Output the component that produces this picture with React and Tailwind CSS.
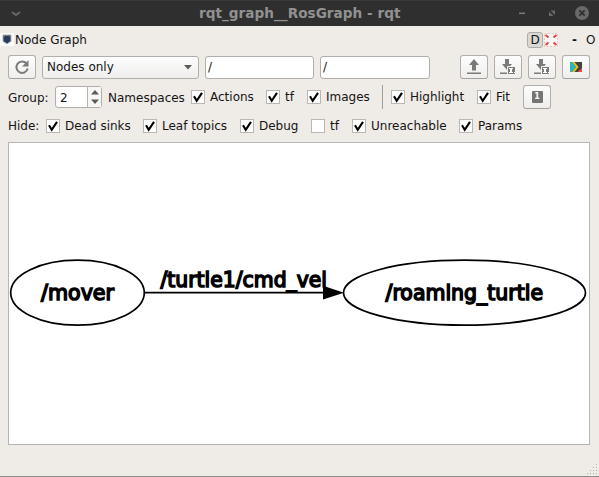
import React from "react";

const button =
  "flex h-6 w-7 shrink-0 items-center justify-center rounded-[3px] border border-[#b1aeab] border-b-[#a3a09d] bg-linear-to-b from-[#fdfdfd] to-[#efeeed]";

function Check({ label, width, checked = true }) {
  return (
    <label className={`flex h-4 shrink-0 items-center gap-[5px] ${width}`}>
      <span className="flex size-[14px] shrink-0 items-center justify-center border border-[#bab7b4] bg-white">
        {checked && (
          <svg className="shrink-0" width="12" height="12" viewBox="0 0 12 12" fill="none" stroke="#000">
            <path d="M2 5.300 L4.700 9.800 L10 1.800" strokeWidth="2.100" />
          </svg>
        )}
      </span>
      <span>{label}</span>
    </label>
  );
}

function ImportIcon() {
  return (
    <svg width="18" height="16" viewBox="0 0 18 16" fill="#7b7b79">
      <path d="M6 0h4v5h3L8 11 3 5h3z" />
      <path d="M1 13.500h7V15H1z" />
      <path d="M8.500 7.500h8v8h-8z" stroke="#f5f4f3" strokeWidth="1" />
      <path d="M10 9h4v1h-1v3h1v1h-4v-1h1v-3h-1zM15 13h1v1h-1z" fill="#fff" />
    </svg>
  );
}

function TitleBar() {
  return (
    <header className="flex h-[26px] items-center border-t border-[#393939] bg-[#2f2f2f] text-[#919191]">
      <svg className="ml-[11px]" width="10" height="8" viewBox="0 0 10 8" fill="none" stroke="#6a6a6a" strokeWidth="1.800">
        <path d="M1 2 L5 5 L9 2" />
      </svg>
      <h1 className="mb-[2px] ml-[178px] w-[319px] whitespace-nowrap text-[13.650px] font-bold leading-[24px]">
        rqt_graph__RosGraph - rqt
      </h1>
      <svg className="mb-px" width="72" height="20" viewBox="0 0 72 20">
        <path d="M1 9.500h6v1.600H1z" fill="#777" />
        <path d="M32.500 7.500h4.500v4.500zM31 8.500l4.500 4.500H31z" fill="#696969" />
        <circle cx="64" cy="10" r="7" fill="#696969" />
        <path d="M61.300 7.300l5.400 5.400m0-5.400l-5.400 5.400" stroke="#2f2f2f" strokeWidth="1.800" />
      </svg>
    </header>
  );
}

function DockTitle() {
  return (
    <div className="flex h-[27px] items-center leading-4">
      <svg width="14" height="13" viewBox="0 0 14 13">
        <path d="M0 0h14v13H0z" fill="#fafafa" />
        <path d="M3 2h8v6.500L9 9.500 7 11 5 9.500 3 8.500z" fill="#293b5a" stroke="#a4b4bd" />
        <path d="M3 2h2v1.500H3zM9 2h2v1.500H9zM6 2h2v1H6z" fill="#87877c" />
      </svg>
      <span className="ml-[1px] w-[512px]">Node Graph</span>
      <span className="flex h-4 w-4 items-center justify-center rounded-[3px] border border-[#adaaa7] bg-[#dad7d5]">D</span>
      <svg className="ml-[1px]" width="14" height="14" viewBox="0 0 14 14" fill="none">
        <path d="M.5.5h13v13H.5z" fill="#faf8f6" stroke="#efc0b3" strokeDasharray="2 1.500" />
        <path d="M1.500 2L4.500 4.500M12.500 2L9.500 4.500M1.500 12l3-2.500M12.500 12l-3-2.500" stroke="#ef3e43" strokeWidth="2" />
      </svg>
      <span className="ml-[14px] w-[14px] font-bold">-</span>
      <span>O</span>
    </div>
  );
}

function Toolbar() {
  return (
    <div className="flex h-6 items-center pl-2">
      <button className={button} aria-label="Refresh">
        <svg width="16" height="16" viewBox="0 0 16 16" fill="none">
          <path d="M12.500 4.500A5.700 5.700 0 1 0 13.700 9.500" stroke="#7b7b79" strokeWidth="2" />
          <path d="M14.500 1v6.500H8z" fill="#7b7b79" />
        </svg>
      </button>
      <div className="ml-[6px] flex h-[23px] w-[157px] shrink-0 items-center justify-between rounded-[3px] border border-[#b1aeab] bg-linear-to-b from-[#fdfdfd] to-[#efeeed] pl-1 pr-[6px]">
        <span>Nodes only</span>
        <svg width="8" height="5" viewBox="0 0 8 5"><path d="M0 0h8L4 4.500z" fill="#5a5a58" /></svg>
      </div>
      <div className="ml-[6px] flex h-[23px] w-[109px] shrink-0 items-center rounded-[3px] border border-[#b1aeab] bg-white pl-[2px]">/</div>
      <div className="ml-[6px] flex h-[23px] w-[110px] shrink-0 items-center rounded-[3px] border border-[#b1aeab] bg-white pl-[2px]">/</div>
      <div className="ml-[30px] flex gap-[6px]">
        <button className={button} aria-label="Export">
          <svg width="16" height="16" viewBox="0 0 16 16" fill="#7b7b79">
            <path d="M8 0L13 6H10V11.500H6V6H3zM1 13.500h14V15H1z" />
          </svg>
        </button>
        <button className={button} aria-label="Save as SVG"><ImportIcon /></button>
        <button className={button} aria-label="Save as image"><ImportIcon /></button>
        <button className={button} aria-label="Theme">
          <svg width="12" height="10" viewBox="0 0 12 10">
            <path d="M0 0h12v10H0z" fill="#414141" />
            <path d="M0 0h2l4 5-4 5H0z" fill="#27b8b8" />
            <path d="M2 0h2.500l4 5-4 5H2l4-5z" fill="#f0bd24" />
            <path d="M7.500 10L12 6v4z" fill="#ee4850" />
          </svg>
        </button>
      </div>
    </div>
  );
}

function Graph() {
  return (
    <svg className="block" width="580" height="301" viewBox="9 143 580 301">
      <g fill="none" stroke="#000" strokeWidth="1.700">
        <ellipse cx="77.500" cy="292.700" rx="66.800" ry="32.500" />
        <ellipse cx="464.500" cy="292.700" rx="121" ry="32.500" />
        <path d="M144.500 292.700H324" />
      </g>
      <path d="M323 285.800L344 292.700L323 299.600z" />
      <g fontFamily="DejaVu Sans, sans-serif" fontSize="20.500" stroke="#000" strokeWidth="1.500">
        <text x="41" y="300.300" textLength="73" lengthAdjust="spacingAndGlyphs">/mover</text>
        <text x="160.500" y="286.500" textLength="166.500" lengthAdjust="spacingAndGlyphs">/turtle1/cmd_vel</text>
        <text x="385.500" y="300.300" textLength="157.500" lengthAdjust="spacingAndGlyphs">/roaming_turtle</text>
      </g>
    </svg>
  );
}

export default function App() {
  return (
    <div className="flex h-[477px] w-[599px] flex-col overflow-hidden border-b border-[#92908e] bg-[#efebe7] font-['DejaVu_Sans',sans-serif] text-[12px] leading-4 text-[#151515]">
      <TitleBar />
      <DockTitle />
      <div className="pt-[2px]"><Toolbar /></div>
      <div className="mt-[6px] flex h-6 items-center pl-2">
        <span className="w-[47px] shrink-0 pt-px">Group:</span>
        <div className="flex h-[22px] w-[47px] shrink-0 items-center rounded-[3px] border border-[#b1aeab] bg-white">
          <span className="w-[31px] pl-1 pt-px">2</span>
          <span className="flex h-full flex-1 items-center justify-center border-l border-[#b9b6b3] bg-[#f7f6f5]">
            <svg className="shrink-0" width="8" height="14" viewBox="0 0 8 14" fill="#5a5a58"><path d="M0 4.500L4 0l4 4.500zM0 9.500h8L4 14z" /></svg>
          </span>
        </div>
        <span className="ml-[6px] w-[83px] shrink-0 pt-px">Namespaces</span>
        <Check label="Actions" width="w-[75px]" />
        <Check label="tf" width="w-[41px]" />
        <Check label="Images" width="w-[75px]" />
        <span className="h-6 w-[9px] shrink-0 border-l border-[#a09d9a]" />
        <Check label="Highlight" width="w-[86px]" />
        <Check label="Fit" width="w-[46px]" />
        <button className={button} aria-label="Zoom to original size">
          <span className="flex h-3 w-[11px] items-center justify-center rounded-[1px] bg-[#757573] text-[8px] font-bold leading-none text-white">1</span>
        </button>
      </div>
      <div className="mt-[9px] flex h-4 items-center pl-2">
        <span className="w-[38px] shrink-0">Hide:</span>
        <Check label="Dead sinks" width="w-[97px]" />
        <Check label="Leaf topics" width="w-[97px]" />
        <Check label="Debug" width="w-[71px]" />
        <Check label="tf" width="w-[41px]" checked={false} />
        <Check label="Unreachable" width="w-[107px]" />
        <Check label="Params" width="w-[80px]" />
      </div>
      <main className="ml-2 mt-2 h-[303px] w-[582px] shrink-0 border border-[#b7b5b3] bg-white"><Graph /></main>
      <footer className="flex flex-1 items-end justify-end pb-[1px] pr-[1px]">
        <svg width="12" height="12" viewBox="0 0 12 12" fill="#b5b2af">
          <path d="M10 1h1v1h-1zM7 4h1v1H7zM10 4h1v1h-1zM4 7h1v1H4zM7 7h1v1H7zM10 7h1v1h-1zM1 10h1v1H1zM4 10h1v1H4zM7 10h1v1H7zM10 10h1v1h-1z" />
        </svg>
      </footer>
    </div>
  );
}
